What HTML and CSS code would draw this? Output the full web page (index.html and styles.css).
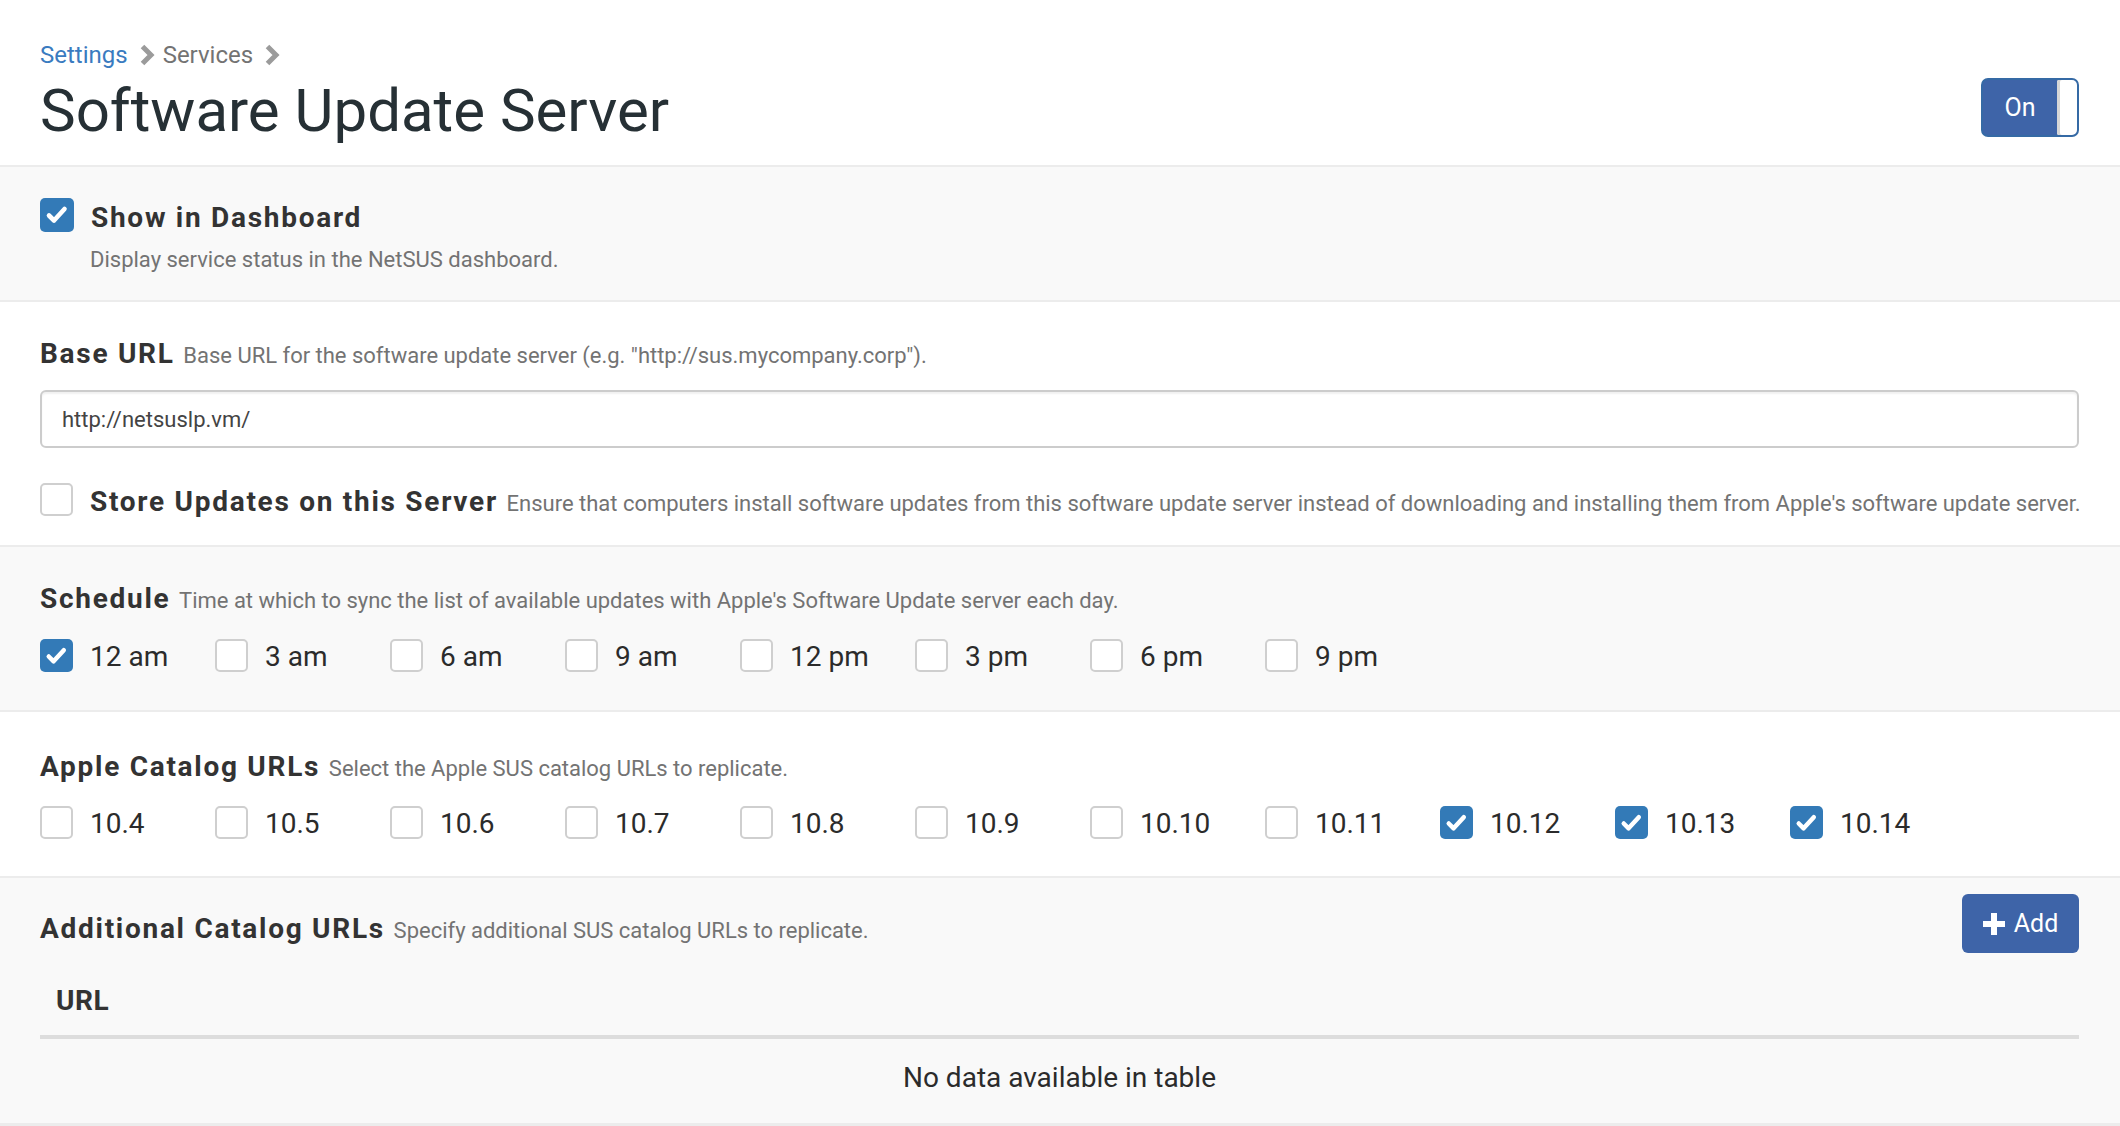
FILE: index.html
```html
<!DOCTYPE html>
<html lang="en">
<head>
<meta charset="utf-8">
<title>Software Update Server</title>
<link rel="stylesheet" href="styles.css">
</head>
<body>
<header class="page-header">
  <div class="heading">
    <nav class="crumbs">
      <a class="crumb-link" href="#">Settings</a>
      <svg class="chev" viewBox="0 0 16 22" width="16" height="22"><polyline points="3.5,2.5 12,11 3.5,19.5" fill="none" stroke="#9b9b9b" stroke-width="5"/></svg>
      <span class="crumb">Services</span>
      <svg class="chev" viewBox="0 0 16 22" width="16" height="22"><polyline points="3.5,2.5 12,11 3.5,19.5" fill="none" stroke="#9b9b9b" stroke-width="5"/></svg>
    </nav>
    <h1 class="title">Software Update Server</h1>
  </div>
  <div class="toggle"><span class="toggle-text">On</span><span class="knob"></span></div>
</header>

<section class="sec gray sec-dash">
  <div class="check-row">
    <span class="cb on"><svg viewBox="0 0 34 34" width="34" height="34"><polyline points="9,17.5 14,22.5 24.5,11" fill="none" stroke="#fff" stroke-width="4.6" stroke-linecap="round" stroke-linejoin="round"/></svg></span>
    <span class="lbl">Show in Dashboard</span>
  </div>
  <p class="help">Display service status in the NetSUS dashboard.</p>
</section>

<section class="sec white sec-url">
  <div class="lbl">Base URL <span class="desc">Base URL for the software update server (e.g. "http://sus.mycompany.corp").</span></div>
  <div class="input">http://netsuslp.vm/</div>
  <div class="check-row store">
    <span class="cb"></span>
    <span class="lbl">Store Updates on this Server <span class="desc">Ensure that computers install software updates from this software update server instead of downloading and installing them from Apple's software update server.</span></span>
  </div>
</section>

<section class="sec gray sec-list">
  <div class="lbl">Schedule <span class="desc">Time at which to sync the list of available updates with Apple's Software Update server each day.</span></div>
  <div class="opts">
    <div class="opt"><span class="cb on"><svg viewBox="0 0 34 34" width="34" height="34"><polyline points="9,17.5 14,22.5 24.5,11" fill="none" stroke="#fff" stroke-width="4.6" stroke-linecap="round" stroke-linejoin="round"/></svg></span><span class="opt-text">12 am</span></div>
    <div class="opt"><span class="cb"></span><span class="opt-text">3 am</span></div>
    <div class="opt"><span class="cb"></span><span class="opt-text">6 am</span></div>
    <div class="opt"><span class="cb"></span><span class="opt-text">9 am</span></div>
    <div class="opt"><span class="cb"></span><span class="opt-text">12 pm</span></div>
    <div class="opt"><span class="cb"></span><span class="opt-text">3 pm</span></div>
    <div class="opt"><span class="cb"></span><span class="opt-text">6 pm</span></div>
    <div class="opt"><span class="cb"></span><span class="opt-text">9 pm</span></div>
  </div>
</section>

<section class="sec white sec-list sec-catalog">
  <div class="lbl">Apple Catalog URLs <span class="desc">Select the Apple SUS catalog URLs to replicate.</span></div>
  <div class="opts">
    <div class="opt"><span class="cb"></span><span class="opt-text">10.4</span></div>
    <div class="opt"><span class="cb"></span><span class="opt-text">10.5</span></div>
    <div class="opt"><span class="cb"></span><span class="opt-text">10.6</span></div>
    <div class="opt"><span class="cb"></span><span class="opt-text">10.7</span></div>
    <div class="opt"><span class="cb"></span><span class="opt-text">10.8</span></div>
    <div class="opt"><span class="cb"></span><span class="opt-text">10.9</span></div>
    <div class="opt"><span class="cb"></span><span class="opt-text">10.10</span></div>
    <div class="opt"><span class="cb"></span><span class="opt-text">10.11</span></div>
    <div class="opt"><span class="cb on"><svg viewBox="0 0 34 34" width="34" height="34"><polyline points="9,17.5 14,22.5 24.5,11" fill="none" stroke="#fff" stroke-width="4.6" stroke-linecap="round" stroke-linejoin="round"/></svg></span><span class="opt-text">10.12</span></div>
    <div class="opt"><span class="cb on"><svg viewBox="0 0 34 34" width="34" height="34"><polyline points="9,17.5 14,22.5 24.5,11" fill="none" stroke="#fff" stroke-width="4.6" stroke-linecap="round" stroke-linejoin="round"/></svg></span><span class="opt-text">10.13</span></div>
    <div class="opt"><span class="cb on"><svg viewBox="0 0 34 34" width="34" height="34"><polyline points="9,17.5 14,22.5 24.5,11" fill="none" stroke="#fff" stroke-width="4.6" stroke-linecap="round" stroke-linejoin="round"/></svg></span><span class="opt-text">10.14</span></div>
  </div>
</section>

<section class="sec gray sec-add">
  <div class="add-head">
    <div class="lbl add-lbl">Additional Catalog URLs <span class="desc">Specify additional SUS catalog URLs to replicate.</span></div>
    <button class="btn-add" type="button"><svg viewBox="0 0 22 22" width="22" height="22"><rect x="8" y="0" width="6" height="22" fill="#fff"/><rect x="0" y="8" width="22" height="6" fill="#fff"/></svg><span>Add</span></button>
  </div>
  <table class="tbl">
    <thead><tr><th>URL</th></tr></thead>
    <tbody><tr><td class="empty">No data available in table</td></tr></tbody>
  </table>
</section>
</body>
</html>
```

FILE: styles.css
```css
html, body {
  margin: 0;
  padding: 0;
  background: #ffffff;
}
body {
  font-family: Roboto, "Liberation Sans", Arial, sans-serif;
  color: #333333;
  width: 2120px;
  height: 1126px;
  overflow: hidden;
}

.page-header {
  display: flex;
  justify-content: space-between;
  align-items: flex-start;
  padding: 40px 41px 18px 40px;
  background: #ffffff;
}
.crumbs {
  display: flex;
  align-items: center;
  height: 30px;
  font-size: 24px;
  line-height: 30px;
}
.crumb-link {
  color: #3a7bc0;
  text-decoration: none;
}
.crumb {
  color: #737373;
}
.chev {
  margin: 0 8px 0 11px;
}
.title {
  margin: 5px 0 0 0;
  font-size: 60px;
  line-height: 72px;
  font-weight: 400;
  color: #263035;
}
.toggle {
  margin-top: 38px;
  width: 98px;
  height: 59px;
  box-sizing: border-box;
  background: #3e64a8;
  border: 2px solid #356aa5;
  border-radius: 7px;
  display: flex;
  align-items: stretch;
}
.toggle-text {
  flex: 1;
  display: flex;
  align-items: center;
  justify-content: center;
  color: #ffffff;
  font-size: 25px;
}
.knob {
  width: 20px;
  background: #ffffff;
  border-radius: 2px 5px 5px 2px;
  box-shadow: inset 3px 0 0 #d6d6d6;
}

.sec {
  border-top: 2px solid #ececec;
  padding: 0 41px 0 40px;
}
.gray { background: #f9f9f9; }
.white { background: #ffffff; }

.lbl {
  font-size: 28px;
  line-height: 36px;
  font-weight: 700;
  letter-spacing: 1.72px;
  color: #333333;
}
.desc {
  font-size: 22px;
  font-weight: 400;
  letter-spacing: -0.01px;
  color: #737373;
}

.cb {
  flex: none;
  width: 33px;
  height: 33px;
  box-sizing: border-box;
  border: 2px solid #cfcfcf;
  border-radius: 5px;
  background: #ffffff;
  display: flex;
  align-items: center;
  justify-content: center;
  overflow: hidden;
}
.cb.on {
  border: none;
  background: #337ab7;
}
.cb svg { display: block; }

.check-row {
  display: flex;
  align-items: center;
  gap: 17px;
}
.check-row .lbl {
  padding-top: 7px;
}

.sec-dash {
  padding-top: 26px;
  height: 135px;
  box-sizing: border-box;
}
.sec-dash .cb { width: 34px; height: 34px; }
.help {
  margin: 9px 0 0 50px;
  font-size: 22px;
  line-height: 30px;
  color: #737373;
}

.sec-url {
  padding-top: 34px;
  height: 245px;
  box-sizing: border-box;
}
.input {
  margin-top: 16px;
  height: 58px;
  box-sizing: border-box;
  border: 2px solid #cccccc;
  border-radius: 6px;
  box-shadow: inset 0 2px 2px rgba(0,0,0,0.06);
  padding: 0 20px;
  display: flex;
  align-items: center;
  font-size: 22px;
  color: #444444;
  background: #ffffff;
}
.store {
  margin-top: 29px;
}
.store .lbl {
  white-space: nowrap;
}

.sec-list {
  padding-top: 34px;
  height: 165px;
  box-sizing: border-box;
}
.sec-catalog {
  padding-top: 37px;
  height: 166px;
}
.opts {
  display: flex;
  margin-top: 17px;
}
.sec-catalog .opts {
  margin-top: 16px;
}
.opt {
  width: 175px;
  flex: none;
  display: flex;
  align-items: center;
  gap: 17px;
}
.opt-text {
  font-size: 28px;
  line-height: 36px;
  padding-top: 3px;
  color: #2b2b2b;
}

.sec-add {
  height: 250px;
  box-sizing: border-box;
  padding-top: 16px;
  border-bottom: 3px solid #ececec;
}
.add-head {
  display: flex;
  justify-content: space-between;
  align-items: center;
}
.add-lbl {
  padding-top: 12px;
}
.btn-add {
  width: 117px;
  height: 59px;
  border: none;
  border-radius: 6px;
  background: #3e64a8;
  color: #ffffff;
  font-family: Roboto, "Liberation Sans", Arial, sans-serif;
  font-size: 25px;
  display: flex;
  align-items: center;
  justify-content: center;
  gap: 9px;
  padding: 0;
}
.tbl {
  width: 100%;
  border-collapse: collapse;
  margin-top: 14px;
}
.tbl th {
  text-align: left;
  font-size: 28px;
  line-height: 36px;
  font-weight: 700;
  letter-spacing: 0.5px;
  padding: 16px 16px;
  border-bottom: 4px solid #dddddd;
  color: #333333;
}
.tbl td {
  font-size: 28px;
  line-height: 36px;
  padding: 21px 16px 10px 16px;
  color: #2b2b2b;
}
.tbl .empty {
  text-align: center;
}
```
